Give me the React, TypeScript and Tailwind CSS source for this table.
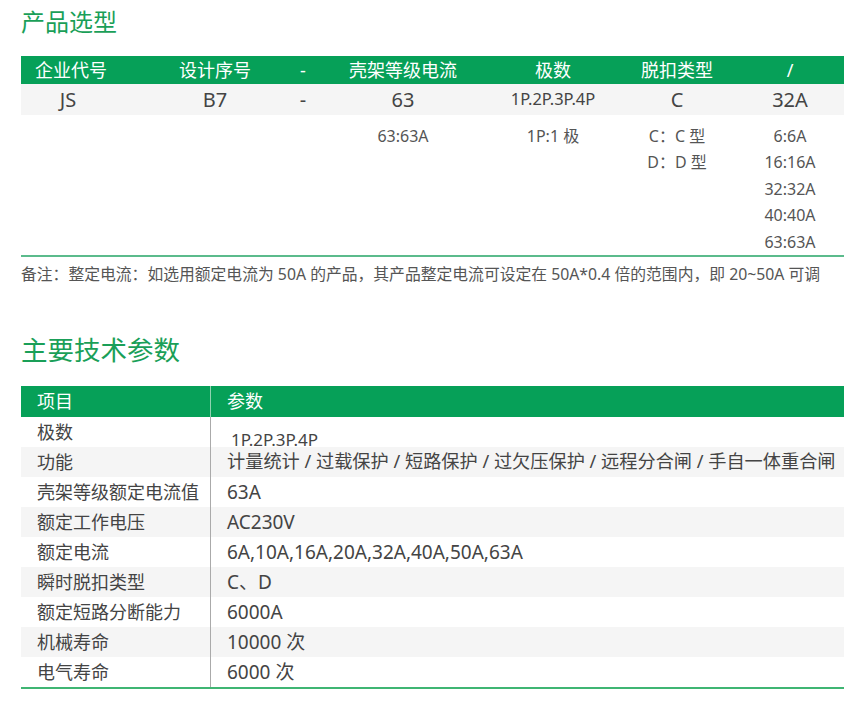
const font = { fontFamily: '"Noto Sans", "Noto Sans CJK SC", sans-serif' };

// 产品选型 columns: width + left offset so each cell centers over its header
const cols = [
  'w-[100px]',
  'ml-[44px] w-[100px]',
  'ml-[18px] w-[40px]',
  'ml-[20px] w-[120px]',
  'ml-[30px] w-[120px]',
  'ml-[14px] w-[100px]',
  'ml-[23px] w-[80px]',
];

const headers = ['企业代号', '设计序号', '-', '壳架等级电流', '极数', '脱扣类型', '/'];

const subCols: string[][] = [
  [],
  [],
  [],
  ['63:63A'],
  ['1P:1 极'],
  ['C：C 型', 'D：D 型'],
  ['6:6A', '16:16A', '32:32A', '40:40A', '63:63A'],
];

const specs = [
  { k: '极数', v: '1P.2P.3P.4P' },
  { k: '功能', v: '计量统计 / 过载保护 / 短路保护 / 过欠压保护 / 远程分合闸 / 手自一体重合闸', cjk: true },
  { k: '壳架等级额定电流值', v: '63A' },
  { k: '额定工作电压', v: 'AC230V' },
  { k: '额定电流', v: '6A,10A,16A,20A,32A,40A,50A,63A' },
  { k: '瞬时脱扣类型', v: 'C、D' },
  { k: '额定短路分断能力', v: '6000A' },
  { k: '机械寿命', v: '10000 次' },
  { k: '电气寿命', v: '6000 次' },
];

export default function App() {
  return (
    <div className="w-[848px] h-[701px] bg-white pl-[21px] pr-[4px] text-[#444]" style={font}>
      {/* 产品选型 */}
      <h2 className="pt-[6px] text-[24px] leading-[32px] text-[#1a9f58]">产品选型</h2>

      <div className="mt-[18px]">
        <div className="flex h-[28px] items-center bg-[#06a058] text-[18px] text-white">
          {headers.map((h, i) => (
            <div key={i} className={`${cols[i]} text-center`}>{h}</div>
          ))}
        </div>
        <div className="flex h-[31px] items-center bg-[#f5f5f5] text-[20px]">
          <div className={`${cols[0]} text-center pr-[6px]`}>JS</div>
          <div className={`${cols[1]} text-center`}>B7</div>
          <div className={`${cols[2]} text-center`}>-</div>
          <div className={`${cols[3]} text-center`}>63</div>
          <div className={`${cols[4]} text-center text-[16.5px]`}>1P.2P.3P.4P</div>
          <div className={`${cols[5]} text-center`}>C</div>
          <div className={`${cols[6]} text-center`}>32A</div>
        </div>
        <div className="flex pt-[8px] text-[16px] leading-[26.4px] text-[#555]">
          {subCols.map((lines, i) => (
            <div key={i} className={`${cols[i]} flex flex-col items-center`}>
              {lines.map((l) => (
                <span key={l}>{l}</span>
              ))}
            </div>
          ))}
        </div>
        <div className="h-[2px] bg-[#5bbb8c]" />
      </div>

      <p className="mt-[5px] text-[15.8px] leading-[24px] text-[#555] whitespace-nowrap">
        备注：整定电流：如选用额定电流为 50A 的产品，其产品整定电流可设定在 50A*0.4 倍的范围内，即 20~50A 可调
      </p>

      {/* 主要技术参数 */}
      <h2 className="mt-[47px] text-[26.5px] leading-[34px] text-[#1a9f58]">主要技术参数</h2>

      <div className="mt-[19px]">
        <div className="flex h-[31px] items-center bg-[#06a058] text-[18px] text-white">
          <div className="w-[190px] h-full flex items-center pl-[16px] border-r border-[#8fd3b0]">项目</div>
          <div className="pl-[16px]">参数</div>
        </div>
        {specs.map((s, i) => (
          <div
            key={s.k}
            className={`flex h-[30px] text-[18px] ${i % 2 === 1 ? 'bg-[#f5f5f5]' : 'bg-white'}`}
          >
            <div className="w-[190px] flex items-center pl-[16px] border-r border-[#aaa]">{s.k}</div>
            {i === 0 ? (
              <div className="flex items-end pl-[20px] text-[17px] leading-[14px]">{s.v}</div>
            ) : (
              <div className={`flex items-center pl-[16px] whitespace-nowrap ${s.cjk ? 'text-[18.2px]' : 'text-[19px]'}`}>
                {s.v}
              </div>
            )}
          </div>
        ))}
        <div className="h-[2px] bg-[#3fb573]" />
      </div>
    </div>
  );
}
